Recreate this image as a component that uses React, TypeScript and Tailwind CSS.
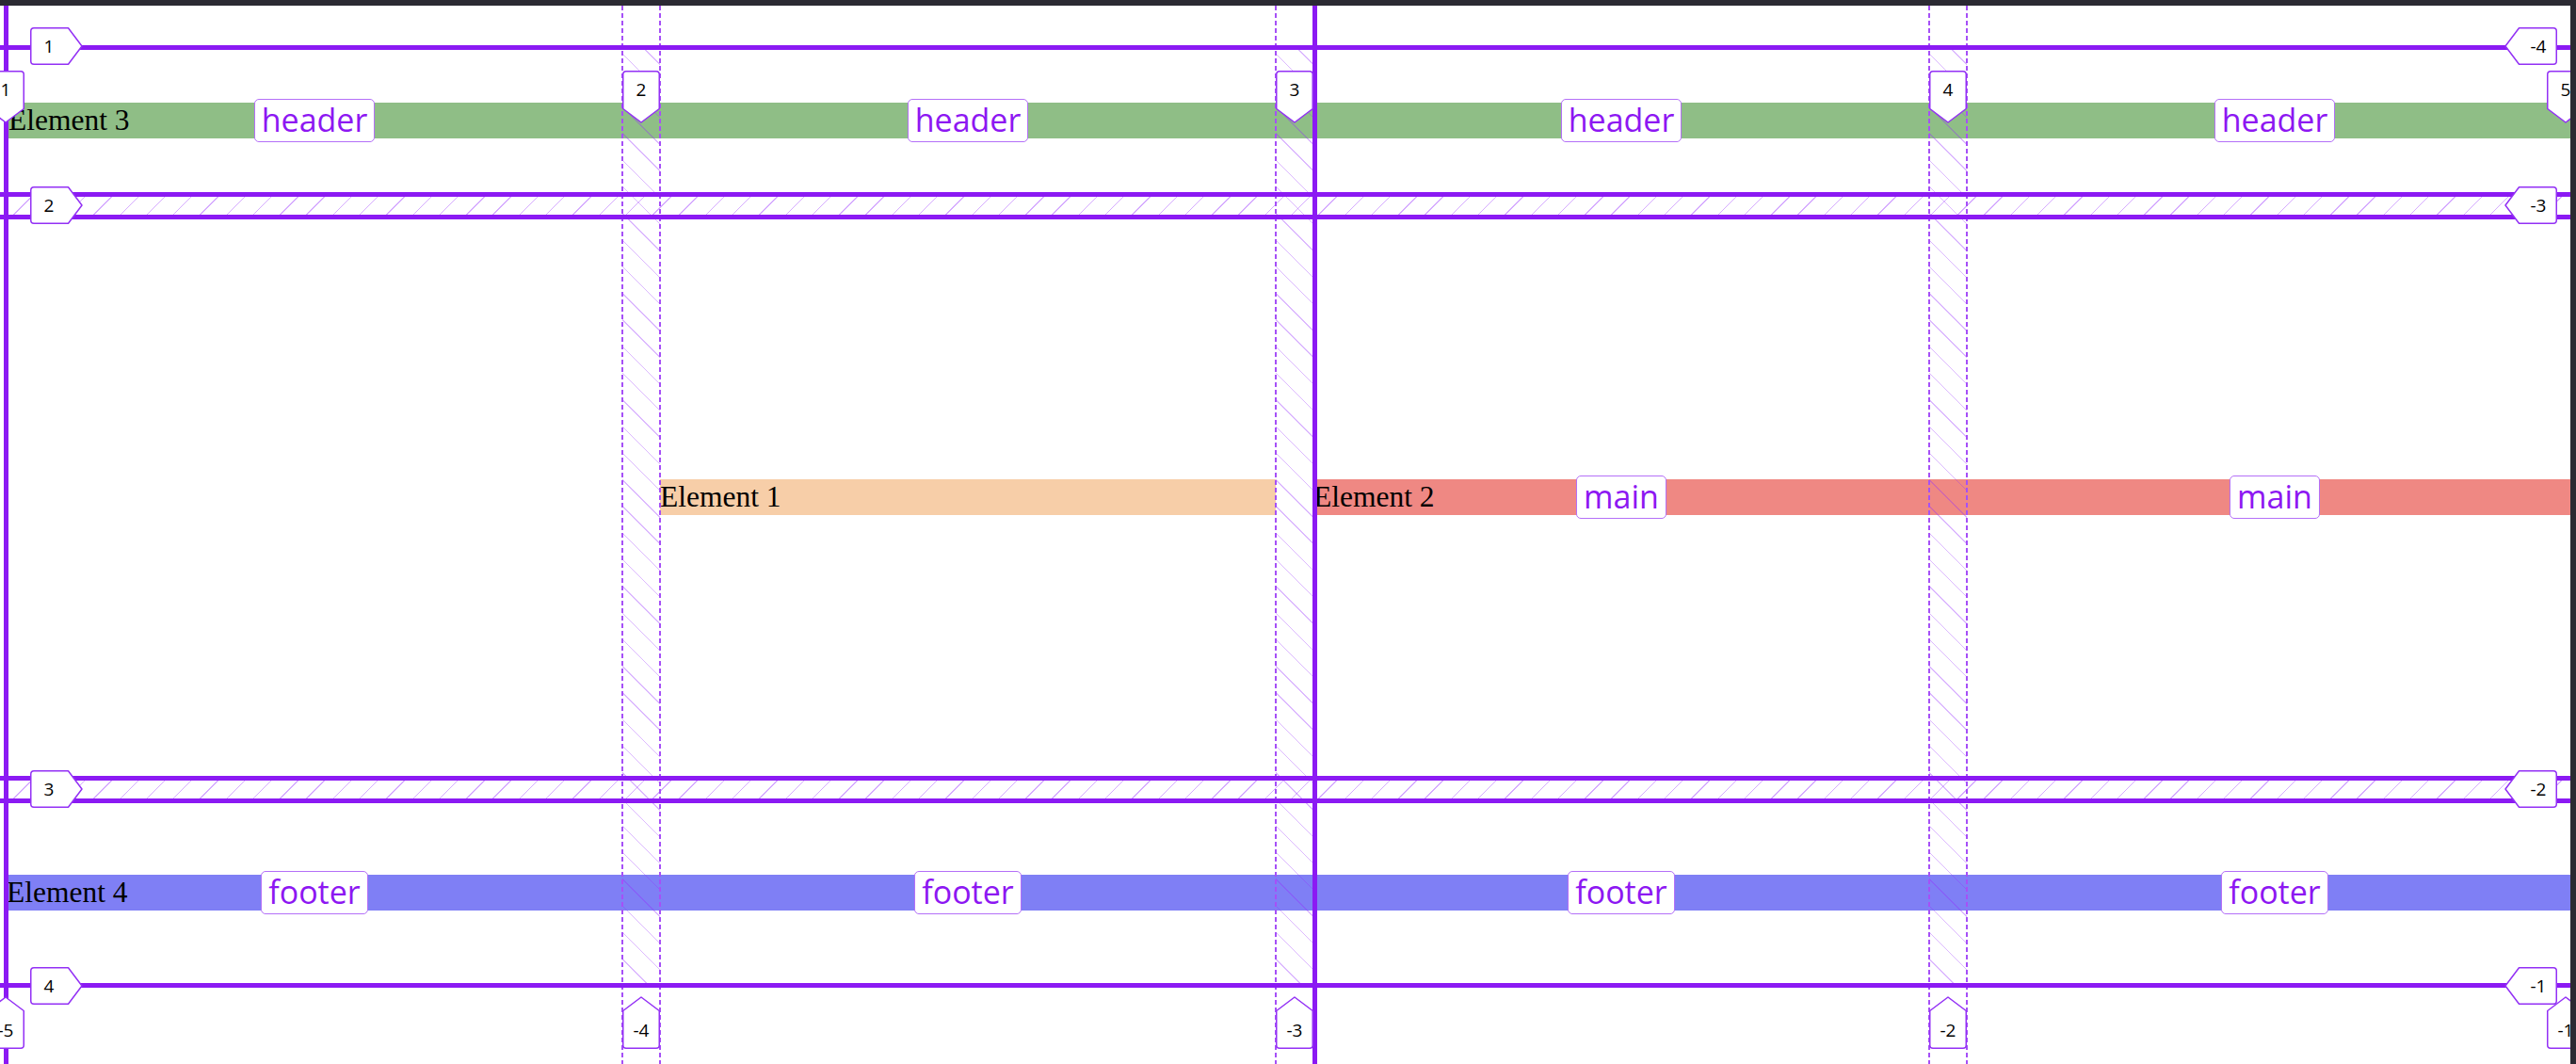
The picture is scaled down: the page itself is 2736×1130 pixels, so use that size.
import React from 'react';

// grid geometry, in canvas px (canvas starts under the 6px top bar)
const X0 = 7;
const Y0 = 44;
const COL = 654;
const GAP_X = 40;
const ROWS = [156, 596, 196];
const GAP_Y = 24;
const CANVAS_W = 2730;
const CANVAS_H = 1124;

const colStart = (i: number) => X0 + i * (COL + GAP_X);
const colEnd = (i: number) => colStart(i) + COL;
const rowStart = (i: number) => Y0 + ROWS.slice(0, i).reduce((a, b) => a + b, 0) + i * GAP_Y;
const rowEnd = (i: number) => rowStart(i) + ROWS[i];

const LINE = 'bg-[#8b1af3]';

type Dir = 'left' | 'right' | 'up' | 'down';

const PATHS: Record<Dir, string> = {
  right: 'M4 .75H40.5L55 20L40.5 39.25H4Q.75 39.25 .75 36V4Q.75 .75 4 .75Z',
  left: 'M52 .75H15.5L1 20L15.5 39.25H52Q55.25 39.25 55.25 36V4Q55.25 .75 52 .75Z',
  down: 'M.75 4Q.75 .75 4 .75H36Q39.25 .75 39.25 4V40.5L20 55L.75 40.5Z',
  up: 'M.75 52Q.75 55.25 4 55.25H36Q39.25 55.25 39.25 52V15.5L20 1L.75 15.5Z',
};

// x,y = position of the arrow tip
const LineTag: React.FC<{ dir: Dir; x: number; y: number; label: string }> = ({ dir, x, y, label }) => {
  const horiz = dir === 'left' || dir === 'right';
  const w = horiz ? 56 : 40;
  const h = horiz ? 40 : 56;
  let left = 0;
  let top = 0;
  if (dir === 'right') { left = x - 56; top = y - 20; }
  if (dir === 'left') { left = x; top = y - 20; }
  if (dir === 'down') { left = x - 20; top = y - 56; }
  if (dir === 'up') { left = x - 20; top = y; }
  const body =
    dir === 'right' ? 'left-0 top-0' : dir === 'left' ? 'left-[16px] top-0' : dir === 'down' ? 'left-0 top-0' : 'left-0 top-[16px]';
  return (
    <div className="absolute" style={{ left, top, width: w, height: h }}>
      <svg className="absolute inset-0" width={w} height={h} viewBox={`0 0 ${w} ${h}`}>
        <path d={PATHS[dir]} fill="#fff" stroke="#9330f5" strokeWidth="1.5" strokeLinejoin="round" />
      </svg>
      <div
        className={`absolute ${body} w-[40px] h-[40px] flex items-center justify-center text-[19px] text-black font-['Open_Sans',sans-serif]`}
      >
        {label}
      </div>
    </div>
  );
};

const AreaName: React.FC<{ name: string; row: string; col: string }> = ({ name, row, col }) => (
  <div
    className={`${row} ${col} place-self-center h-[46px] px-[7px] flex items-center bg-white border-[1.5px] border-[#b470f8] rounded-[5px] text-[#8d17f2] text-[34px] leading-none font-['Open_Sans',sans-serif]`}
  >
    <span className="-mt-[3px]">{name}</span>
  </div>
);

const GRID =
  'grid grid-cols-[repeat(4,654px)] grid-rows-[156px_596px_196px] gap-x-[40px] gap-y-[24px] pl-[7px] pt-[44px] w-max';

const App: React.FC = () => {
  const solidRows = [0, 1, 2].flatMap((i) => [rowStart(i), rowEnd(i)]);
  const dashedCols = [colEnd(0), colStart(1), colEnd(1), colEnd(2), colStart(3)];
  const labelCols = [X0 - 1, (colEnd(0) + colStart(1)) / 2, (colEnd(1) + colStart(2)) / 2, (colEnd(2) + colStart(3)) / 2, 2725];
  const labelRows = [rowStart(0) - 1, (rowEnd(0) + rowStart(1)) / 2, (rowEnd(1) + rowStart(2)) / 2, rowEnd(2) + 1];

  return (
    <div className="w-[2736px] h-[1130px] flex flex-col overflow-hidden bg-white">
      <div className="h-[6px] shrink-0 bg-[#2b2a33]" />
      <div className="flex flex-1 min-h-0">
        <div className="relative w-[2730px] h-full overflow-hidden">
          {/* page content */}
          <div className={`${GRID} font-['Liberation_Serif',serif] text-black text-[31.5px] leading-[38px]`}>
            <div className="col-span-4 row-start-1 self-center h-[38px] bg-[#8fbe86] pl-[2px] whitespace-nowrap">Element 3</div>
            <div className="col-start-2 row-start-2 self-center h-[38px] bg-[#f7cea8] whitespace-nowrap">Element 1</div>
            <div className="col-start-3 col-span-2 row-start-2 self-center h-[38px] bg-[#ef8883] whitespace-nowrap">Element 2</div>
            <div className="col-span-4 row-start-3 self-center h-[38px] bg-[#7f7ff5] whitespace-nowrap">Element 4</div>
          </div>

          {/* gap hatching */}
          {[0, 1, 2].map((i) => (
            <div
              key={`hc${i}`}
              className="absolute bg-[image:repeating-linear-gradient(45deg,transparent_0_19px,rgba(148,40,255,0.32)_19px_20px)]"
              style={{ left: colEnd(i), top: rowStart(0), width: GAP_X, height: rowEnd(2) - rowStart(0) }}
            />
          ))}
          {[0, 1].map((i) => (
            <div
              key={`hr${i}`}
              className="absolute bg-[image:repeating-linear-gradient(135deg,transparent_0_19px,rgba(148,40,255,0.38)_19px_20px)]"
              style={{ left: 9, top: rowEnd(i), width: CANVAS_W - 9, height: GAP_Y }}
            />
          ))}

          {/* dashed column lines */}
          {dashedCols.map((x) => (
            <div
              key={`d${x}`}
              className="absolute top-0 w-[2px] bg-[image:repeating-linear-gradient(to_bottom,#a650f7_0_5px,transparent_5px_8px)]"
              style={{ left: x - 1, height: CANVAS_H }}
            />
          ))}

          {/* solid lines */}
          {solidRows.map((y) => (
            <div key={`r${y}`} className={`absolute left-0 h-[5px] ${LINE}`} style={{ top: y - 2.5, width: CANVAS_W }} />
          ))}
          <div className={`absolute top-0 left-[4px] w-[5px] h-full ${LINE}`} />
          <div className={`absolute top-0 left-[1394px] w-[5px] h-full ${LINE}`} />

          {/* area names */}
          <div className={`absolute left-0 top-0 ${GRID}`}>
            <AreaName name="header" row="row-start-1" col="col-start-1" />
            <AreaName name="header" row="row-start-1" col="col-start-2" />
            <AreaName name="header" row="row-start-1" col="col-start-3" />
            <AreaName name="header" row="row-start-1" col="col-start-4" />
            <AreaName name="main" row="row-start-2" col="col-start-3" />
            <AreaName name="main" row="row-start-2" col="col-start-4" />
            <AreaName name="footer" row="row-start-3" col="col-start-1" />
            <AreaName name="footer" row="row-start-3" col="col-start-2" />
            <AreaName name="footer" row="row-start-3" col="col-start-3" />
            <AreaName name="footer" row="row-start-3" col="col-start-4" />
          </div>

          {/* line numbers */}
          {labelRows.map((y, i) => (
            <LineTag key={`lr${i}`} dir="right" x={88} y={y} label={String(i + 1)} />
          ))}
          {labelRows.map((y, i) => (
            <LineTag key={`rr${i}`} dir="left" x={2660} y={y} label={`-${4 - i}`} />
          ))}
          {labelCols.map((x, i) => (
            <LineTag key={`tc${i}`} dir="down" x={x} y={125} label={String(i + 1)} />
          ))}
          {labelCols.map((x, i) => (
            <LineTag key={`bc${i}`} dir="up" x={x} y={1052} label={`-${5 - i}`} />
          ))}
        </div>
        <div className="w-[6px] shrink-0 bg-[#2b2a33]" />
      </div>
    </div>
  );
};

export default App;
